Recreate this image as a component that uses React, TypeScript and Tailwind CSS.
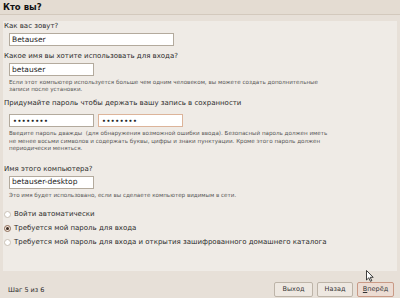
import React from "react";

const font = { fontFamily: '"DejaVu Sans", "Liberation Sans", sans-serif' };

function Field({ value, w, password, focus }: { value: string; w: string; password?: boolean; focus?: boolean }) {
  return (
    <div
      className={`${w} h-[13px] bg-white border ${focus ? "border-[#dcb49a]" : "border-[#b3aa9d]"} flex items-center px-[2px] text-[7.5px] text-[#222]`}
    >
      {password ? <span className="tracking-[0.6px] text-[6px] pl-[1px] font-bold">••••••••</span> : value}
    </div>
  );
}

function Radio({ label, checked }: { label: string; checked?: boolean }) {
  return (
    <div className="flex items-center gap-[3px] h-[14px]">
      <span
        className={`w-[7px] h-[7px] rounded-full border flex items-center justify-center ${
          checked ? "border-[#8a6a55] bg-[#f3e6dc]" : "border-[#c9c1b6] bg-white"
        }`}
      >
        {checked && <span className="w-[3px] h-[3px] rounded-full bg-[#3a2a22]" />}
      </span>
      <span className="text-[7px] text-[#2c2c2c]">{label}</span>
    </div>
  );
}

function Btn({ children, main }: { children: React.ReactNode; main?: boolean }) {
  return (
    <div
      className={`h-[15px] flex items-center justify-center border rounded-[2px] text-[6.5px] text-[#333] ${
        main ? "border-[#c99a86] bg-[#ecdcd3]" : "border-[#bdb4a8] bg-[#eee8e1]"
      }`}
    >
      {children}
    </div>
  );
}

export default function App() {
  return (
    <div style={font} className="w-[400px] h-[298px] bg-[#e7e0d8] overflow-hidden flex flex-col relative">
      <div className="h-[15px] border-b border-[#d3c9bd] bg-[#e4dcd2] flex items-center px-[3px]">
        <h1 className="text-[8.5px] font-bold text-[#111]">Кто вы?</h1>
      </div>

      <div className="mx-[3px] mt-[6px] h-[250px] bg-[#efebe6] pl-[1px] pt-[1px] text-[#2c2c2c]">
        <p className="text-[7px] leading-[9px]">Как вас зовут?</p>
        <div className="pl-[5px] mt-[2px]">
          <Field value="Betauser" w="w-[165px]" />
        </div>

        <p className="text-[7px] leading-[9px] mt-[6px]">Какое имя вы хотите использовать для входа?</p>
        <div className="pl-[5px] mt-[2px]">
          <Field value="betauser" w="w-[85px]" />
          <p className="text-[5.6px] leading-[7px] mt-[3px] text-[#555]">
            Если этот компьютер используется больше чем одним человеком, вы можете создать дополнительные
            <br />
            записи после установки.
          </p>
        </div>

        <p className="text-[7px] leading-[9px] mt-[6px]">Придумайте пароль чтобы держать вашу запись в сохранности</p>
        <div className="pl-[5px] mt-[6px]">
          <div className="flex gap-[4px]">
            <Field value="" w="w-[85px]" password />
            <Field value="" w="w-[85px]" password focus />
          </div>
          <p className="text-[5.6px] leading-[7.5px] mt-[3px] text-[#555]">
            Введите пароль дважды &nbsp;(для обнаружения возможной ошибки ввода). Безопасный пароль должен иметь
            <br />
            не менее восьми символов и содержать буквы, цифры и знаки пунктуации. Кроме этого пароль должен
            <br />
            периодически меняться.
          </p>
        </div>

        <p className="text-[7px] leading-[9px] mt-[12px]">Имя этого компьютера?</p>
        <div className="pl-[5px] mt-[2px]">
          <Field value="betauser-desktop" w="w-[85px]" />
          <p className="text-[5.6px] leading-[7px] mt-[3px] text-[#555]">
            Это имя будет использовано, если вы сделаете компьютер видимым в сети.
          </p>
        </div>

        <div className="mt-[9px] flex flex-col">
          <Radio label="Войти автоматически" />
          <Radio label="Требуется мой пароль для входа" checked />
          <Radio label="Требуется мой пароль для входа и открытия зашифрованного домашнего каталога" />
        </div>
      </div>

      <div className="flex items-center mt-[11px] pl-[8px] pr-[6px]">
        <span className="text-[6.5px] text-[#2c2c2c] pt-[2px]">Шаг 5 из 6</span>
        <div className="ml-auto flex gap-[4px]">
          <div className="w-[39px]"><Btn>Выход</Btn></div>
          <div className="w-[36px]"><Btn>Назад</Btn></div>
          <div className="w-[37px]"><Btn main><span><u>В</u>перёд</span></Btn></div>
        </div>
      </div>

      <svg className="absolute left-[366px] top-[270px]" width="8" height="12" viewBox="0 0 8 12">
        <path d="M0.5 0.5 L0.5 10 L2.8 7.8 L4.4 11.3 L5.8 10.7 L4.2 7.3 L7.2 7.3 Z" fill="#fff" stroke="#111" strokeWidth="0.8" />
      </svg>
    </div>
  );
}
